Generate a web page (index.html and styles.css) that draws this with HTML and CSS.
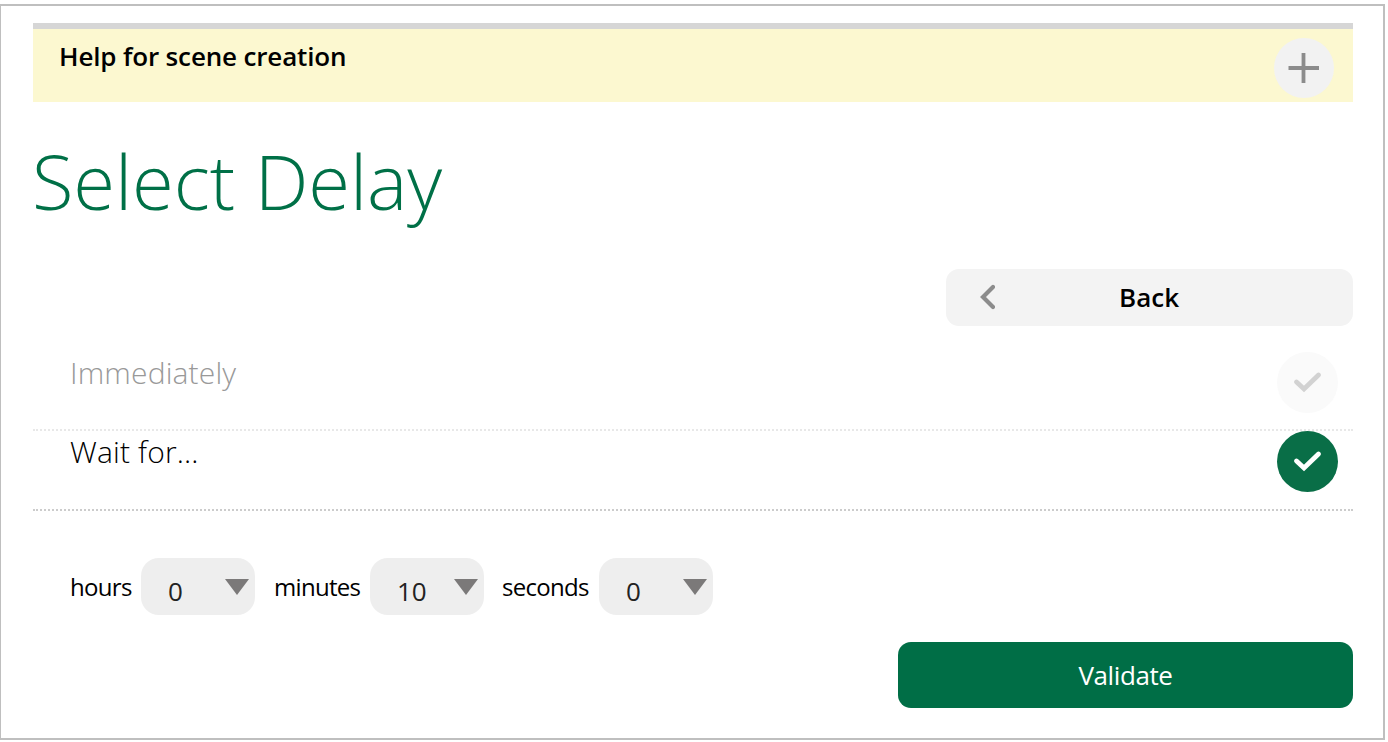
FILE: index.html
```html
<!DOCTYPE html>
<html lang="en">
<head>
    <meta charset="UTF-8" />
    <meta name="viewport" content="width=device-width, initial-scale=1.0">
    <title>Select Delay</title>
    <link rel="stylesheet" href="styles.css">
</head>
<body>
    <div class="container">
        <div class="help">
            <span class="help-text">Help for scene creation</span>
            <svg class="help-icon" viewBox="0 0 60 60">
                <circle cx="30" cy="30" r="30" fill="#f2f2f2"/>
                <path d="M14.5 30H45M29.5 15V45" stroke="#8c8c8c" stroke-width="3.8" fill="none"/>
            </svg>
        </div>

        <h1 class="title">Select Delay</h1>

        <button class="btn-back">
            <svg class="back-icon" viewBox="0 0 16 26">
                <path d="M14 3L4 13L14 23" stroke="#8c8c8c" stroke-width="4.2" stroke-linecap="round" fill="none"/>
            </svg>
            <span class="back-text">Back</span>
        </button>

        <div class="options">
            <div class="option">
                <span class="option-text">Immediately</span>
                <svg class="check" viewBox="0 0 61 61">
                    <circle cx="30.5" cy="30.5" r="30.5" fill="#fafafa"/>
                    <path d="M19.5 30L27 37L41.5 23" stroke="#d2d2d2" stroke-width="4.8" stroke-linecap="round" fill="none"/>
                </svg>
            </div>
            <div class="option selected">
                <span class="option-text">Wait for...</span>
                <svg class="check" viewBox="0 0 61 61">
                    <circle cx="30.5" cy="30.5" r="30.5" fill="#096e47"/>
                    <path d="M19.5 30L27 37L41.5 23" stroke="#fff" stroke-width="4.8" stroke-linecap="round" fill="none"/>
                </svg>
            </div>
        </div>

        <div class="delay">
            <label class="label-hours" for="hours">hours</label>
            <div class="select-box">
                <select id="hours"><option>0</option></select>
            </div>
            <label class="label-minutes" for="minutes">minutes</label>
            <div class="select-box">
                <select id="minutes"><option>10</option></select>
            </div>
            <label class="label-seconds" for="seconds">seconds</label>
            <div class="select-box">
                <select id="seconds"><option>0</option></select>
            </div>
        </div>

        <button class="btn-validate">Validate</button>
    </div>
</body>
</html>
```
FILE: styles.css
```css
* {
    box-sizing: border-box;
}

body {
    margin: 0;
    padding-top: 4px;
    background-color: #fff;
    color: #000;
    font-family: "Open Sans", "Noto Sans", sans-serif;
}

.container {
    display: flex;
    flex-direction: column;
    width: 1385px;
    height: 736px;
    padding: 17px 30px 0 32px;
    border: 2px solid #bfbfbf;
    border-left-width: 1px;
}

.help {
    display: flex;
    justify-content: space-between;
    height: 79px;
    padding: 9px 19px 0 26px;
    border-top: 6px solid #d6d6d6;
    background-color: #fcf8d0;
}

.help-text {
    font-size: 26px;
    font-weight: 600;
    line-height: 37px;
    letter-spacing: -0.15px;
}

.help-icon {
    width: 60px;
    height: 60px;
}

.title {
    margin: 29px 0 38px -1px;
    color: #007047;
    font-size: 76px;
    font-weight: 300;
    line-height: 100px;
    letter-spacing: -0.1px;
}

button {
    padding: 0;
    border: none;
    border-radius: 13px;
    font-family: inherit;
    font-size: 26px;
    cursor: pointer;
    align-self: flex-end;
}

.btn-back {
    display: flex;
    align-items: center;
    width: 407px;
    height: 57px;
    padding: 0 0 2px 33px;
    background-color: #f3f3f3;
    color: #000;
    font-weight: 600;
}

.back-icon {
    width: 16px;
    height: 26px;
}

.back-text {
    margin-left: 124px;
}

.options {
    margin-top: 26px;
}

.option {
    display: flex;
    justify-content: space-between;
    height: 79px;
    padding: 0 15px 0 37px;
    border-bottom: 2px dotted #e8e8e8;
    color: #999;
}

.option-text {
    font-size: 30px;
    font-weight: 300;
    line-height: 42px;
    letter-spacing: 0.15px;
}

.check {
    width: 61px;
    height: 61px;
}

.selected {
    height: 80px;
    border-bottom-color: #ccc;
    color: #000;
}

.delay {
    display: flex;
    margin: 47px 0 26px 37px;
}

.delay label {
    font-size: 24px;
    line-height: 58px;
    letter-spacing: -0.7px;
}

.label-hours {
    width: 71px;
}

.label-minutes {
    width: 96px;
    margin-left: 19px;
}

.label-seconds {
    width: 97px;
    margin-left: 18px;
}

.select-box {
    position: relative;
    width: 114px;
    height: 57px;
}

.select-box::after {
    content: "";
    position: absolute;
    top: 21px;
    right: 6px;
    border: 12px solid transparent;
    border-top: 16px solid #7b7979;
    border-bottom: none;
    pointer-events: none;
}

select {
    appearance: none;
    width: 100%;
    height: 100%;
    padding: 9px 0 0 27px;
    border: none;
    border-radius: 18px;
    background-color: #eee;
    color: #222;
    font-family: inherit;
    font-size: 26px;
}

.btn-validate {
    width: 455px;
    height: 66px;
    padding-bottom: 1px;
    background-color: #006e46;
    color: #fff;
    letter-spacing: -0.4px;
}
```
